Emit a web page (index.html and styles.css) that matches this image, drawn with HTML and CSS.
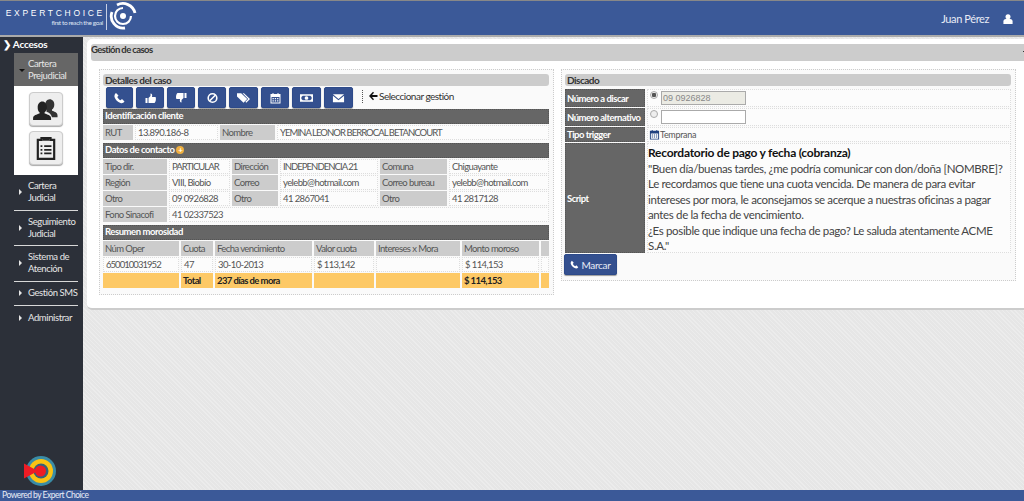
FILE: index.html
```html
<!DOCTYPE html>
<html>
<head>
  <meta charset="utf-8">
  <title>Gestión de casos</title>
  <link rel="stylesheet" href="styles.css">
</head>
<body>
  <header class="topbar">
    <div class="brand">
      <div class="brand-name">EXPERTCHOICE</div>
      <div class="brand-tag">first to reach the goal</div>
    </div>
    <svg class="brand-logo" viewBox="0 0 28 28" width="28" height="28">
      <circle cx="14" cy="14" r="3" fill="#fff"/>
      <path d="M14 6a8 8 0 1 0 8 8" fill="none" stroke="#fff" stroke-width="2.200"/>
      <path d="M8 3a12.500 12.500 0 0 1 18 8" fill="none" stroke="#fff" stroke-width="2.800"/>
      <path d="M3 10a12 12 0 0 0 13 16" fill="none" stroke="#fff" stroke-width="2.800"/>
    </svg>
    <div class="user">
      <span>Juan Pérez</span>
      <svg viewBox="0 0 12 12" width="10" height="10"><circle cx="6" cy="3.200" r="3" fill="#fff"/><path d="M0.500 12V9q0-3 3-3h5q3 0 3 3v3z" fill="#fff"/></svg>
    </div>
  </header>

  <div class="middle">
    <nav class="sidebar">
      <div class="nav-title"><span class="chevron">❯</span>Accesos</div>
      <div class="nav-item active"><i class="caret-down"></i><span>Cartera<br>Prejudicial</span></div>
      <div class="nav-sub">
        <div class="tile">
          <svg viewBox="0 0 28 26" width="26" height="24"><path d="M18 2.500c3 0 5 2.500 5 5.500 0 2.500-1 4.500-2.500 5.500v1.500c3 1 6 2 6 5v2h-6c-.5-3-3-5-6-6v-2c-1-1-1.500-3-1.500-5 0-3.500 2-6.500 5-6.500z" fill="#333"/><path d="M10 5c3 0 5 3 5 6 0 2.500-1 4.500-2.500 5.500V18c3 1 7 2 7 5v2H0v-2c0-3 4-4 7-5v-1.500C5.500 15.500 5 13.500 5 11c0-3 2-6 5-6z" fill="#222"/></svg>
        </div>
        <div class="tile">
          <svg viewBox="0 0 22 28" width="20" height="26"><path d="M2 5h4V3h10v2h4v21H2z" fill="none" stroke="#222" stroke-width="2.400"/><path d="M5 11h2v2H5zM9 11h8v2H9zM5 15h2v2H5zM9 15h8v2H9zM5 19h2v2H5zM9 19h8v2H9z" fill="#222"/><path d="M7 2h8v4H7z" fill="#222"/></svg>
        </div>
      </div>
      <div class="nav-item sep two"><i class="caret-right"></i><span>Cartera<br>Judicial</span></div>
      <div class="nav-item sep two"><i class="caret-right"></i><span>Seguimiento<br>Judicial</span></div>
      <div class="nav-item sep two"><i class="caret-right"></i><span>Sistema de<br>Atención</span></div>
      <div class="nav-item sep one"><i class="caret-right"></i><span>Gestión SMS</span></div>
      <div class="nav-item one"><i class="caret-right"></i><span>Administrar</span></div>
      <svg class="target" viewBox="0 0 32 32" width="32" height="32">
        <circle cx="17" cy="16" r="15" fill="#3a8ca6"/>
        <circle cx="17" cy="16" r="12" fill="#fbc312"/>
        <circle cx="17" cy="16" r="7.500" fill="#35637a"/>
        <circle cx="16.500" cy="16" r="5.500" fill="#ee1c25"/>
        <path d="M0 8.500L14 16 0 23.500z" fill="#ee1c25"/>
      </svg>
    </nav>

    <main class="content">
      <section class="card">
        <div class="card-title">Gestión de casos<i class="card-cut"></i></div>
        <div class="columns">
          <div class="panel panel-left">
            <div class="panel-head">Detalles del caso</div>
            <div class="toolbar">
              <button class="btn w27"><svg viewBox="0 0 12 12"><path d="M2.500 1L5 3.500 3.800 5c.5 1.300 1.700 2.600 3.200 3.200L8.500 7 11 9.500C10 11 8.500 11.500 7 11 4 10 2 8 1 5 .7 3.500 1.300 2 2.500 1z"/></svg></button>
              <button class="btn w28"><svg viewBox="0 0 12 12"><path d="M1 6h2v5H1zM4 6l2-2V1.500C7.500 1.500 8 3 7.500 5H11c.8 1 .5 5-1 6H4z"/></svg></button>
              <button class="btn w28"><svg viewBox="0 0 12 12"><path d="M11 6H9V1h2zM8 6l-2 2v2.500C4.500 10.500 4 9 4.500 7H1C.2 6 .5 2 2 1h6z"/></svg></button>
              <button class="btn w28"><svg viewBox="0 0 12 12"><circle cx="6" cy="6" r="4.300" fill="none" stroke="#fff" stroke-width="1.600"/><path d="M3 9L9 3" stroke="#fff" stroke-width="1.600"/></svg></button>
              <button class="btn w29"><svg viewBox="0 0 14 12"><path d="M0 1h4.500L11 7l-4 4-7-6.500z"/><path d="M6 1h1.500L14 7l-4 4-1-1 3-3z"/></svg></button>
              <button class="btn w28"><svg viewBox="0 0 12 12"><path fill-rule="evenodd" d="M1 2h2V1h1v1h4V1h1v1h2v9.500H1zM2 5v5.500h8V5zM3 6h1.300v1.200H3zM5.300 6h1.300v1.200H5.300zM7.600 6h1.300v1.200H7.600zM3 8.200h1.300v1.200H3zM5.300 8.200h1.300v1.200H5.300zM7.600 8.200h1.300v1.200H7.600z"/></svg></button>
              <button class="btn w29"><svg viewBox="0 0 14 12"><path fill-rule="evenodd" d="M0 2h14v8H0zM3 3.500L1.500 5v2L3 8.500h8L12.500 7V5L11 3.500zM7 4a2 2 0 1 1 0 4 2 2 0 0 1 0-4z"/></svg></button>
              <button class="btn w29"><svg viewBox="0 0 14 12"><path d="M1 2h12L7 7zM1 3.500l6 5 6-5V10.500H1z"/></svg></button>
              <span class="tool-sep"></span>
              <span class="tool-link"><svg viewBox="0 0 10 10" width="10" height="10"><path d="M5 0.800L1 5l4 4.200 1-1L4 6h5.500V4H4l2-2.200z" fill="#111"/></svg>Seleccionar gestión</span>
            </div>

            <div class="bar">Identificación cliente</div>
            <div class="row row-rut">
              <div class="lbl">RUT</div><div class="val">13.890.186-8</div>
              <div class="lbl">Nombre</div><div class="val caps">YEMINA LEONOR BERROCAL BETANCOURT</div>
            </div>

            <div class="bar bar-gap">Datos de contacto <i class="plus">+</i></div>
            <div class="row row-contact">
              <div class="lbl">Tipo dir.</div><div class="val caps">PARTICULAR</div>
              <div class="lbl">Dirección</div><div class="val caps">INDEPENDENCIA 21</div>
              <div class="lbl">Comuna</div><div class="val">Chiguayante</div>
            </div>
            <div class="row row-contact">
              <div class="lbl">Región</div><div class="val">VIII, Biobío</div>
              <div class="lbl">Correo</div><div class="val">yelebb@hotmail.com</div>
              <div class="lbl">Correo bureau</div><div class="val">yelebb@hotmail.com</div>
            </div>
            <div class="row row-contact">
              <div class="lbl">Otro</div><div class="val">09 0926828</div>
              <div class="lbl">Otro</div><div class="val">41 2867041</div>
              <div class="lbl">Otro</div><div class="val">41 2817128</div>
            </div>
            <div class="row row-sina">
              <div class="lbl">Fono Sinacofi</div><div class="val">41 02337523</div>
            </div>

            <div class="bar bar-gap">Resumen morosidad</div>
            <div class="row row-debt">
              <div class="lbl">Núm Oper</div><div class="lbl">Cuota</div><div class="lbl">Fecha vencimiento</div><div class="lbl">Valor cuota</div><div class="lbl">Intereses x Mora</div><div class="lbl">Monto moroso</div><div class="lbl"></div>
            </div>
            <div class="row row-debt">
              <div class="val caps">650010031952</div><div class="val">47</div><div class="val">30-10-2013</div><div class="val">$ 113,142</div><div class="val"></div><div class="val">$ 114,153</div><div class="val"></div>
            </div>
            <div class="row row-debt">
              <div class="tot"></div><div class="tot">Total</div><div class="tot">237 días de mora</div><div class="tot"></div><div class="tot"></div><div class="tot">$ 114,153</div><div class="tot"></div>
            </div>
          </div>

          <div class="panel panel-right">
            <div class="panel-head">Discado</div>
            <div class="dial dial-num">
              <div class="dial-lbl">Número a discar</div>
              <div class="dial-val"><i class="radio on"></i><input class="num" value="09 0926828" disabled></div>
            </div>
            <div class="dial dial-num">
              <div class="dial-lbl">Número alternativo</div>
              <div class="dial-val"><i class="radio"></i><input class="num"></div>
            </div>
            <div class="dial dial-type">
              <div class="dial-lbl">Tipo trigger</div>
              <div class="dial-val trigger"><svg viewBox="0 0 12 12" width="11" height="11"><path fill="#1f3f7f" fill-rule="evenodd" d="M1 2h2V1h1v1h4V1h1v1h2v9.500H1zM2 5v5.500h8V5zM3 6h1.300v1.200H3zM5.300 6h1.300v1.200H5.300zM7.600 6h1.300v1.200H7.600zM3 8.200h1.300v1.200H3zM5.300 8.200h1.300v1.200H5.300zM7.600 8.200h1.300v1.200H7.600z"/></svg>Temprana</div>
            </div>
            <div class="dial dial-script">
              <div class="dial-lbl">Script</div>
              <div class="dial-val script">
                <b>Recordatorio de pago y fecha (cobranza)</b><br>
                "Buen día/buenas tardes, ¿me podría comunicar con don/doña [NOMBRE]?<br>
                Le recordamos que tiene una cuota vencida. De manera de para evitar<br>
                intereses por mora, le aconsejamos se acerque a nuestras oficinas a pagar<br>
                antes de la fecha de vencimiento.<br>
                ¿Es posible que indique una fecha de pago? Le saluda atentamente ACME<br>
                S.A."
              </div>
            </div>
            <button class="btn call"><svg viewBox="0 0 12 12"><path d="M2.500 1L5 3.500 3.800 5c.5 1.300 1.700 2.600 3.200 3.200L8.500 7 11 9.500C10 11 8.500 11.500 7 11 4 10 2 8 1 5 .7 3.500 1.300 2 2.500 1z"/></svg>Marcar</button>
          </div>
        </div>
      </section>
    </main>
  </div>

  <footer class="footer">Powered by Expert Choice</footer>
</body>
</html>
```

FILE: styles.css
```css
* { box-sizing: border-box; }
html, body { height: 100%; }
body { margin: 0; height: 501px; overflow: hidden; display: flex; flex-direction: column; font-family: Lato, sans-serif; font-size: 10px; color: #555; background: #e6e6e6 repeating-linear-gradient(45deg, rgba(255,255,255,.25) 0 1px, transparent 1px 3px); }

/* top */
.topbar { height: 37px; flex: none; display: flex; align-items: flex-start; background: #3b5998; border-top: 1px solid #888; border-bottom: 2px solid #aaa; color: #fff; }
.brand { width: 107px; height: 26px; margin-top: 3px; padding: 4px 3px 0 0; border-right: 1px solid #c8d0e4; text-align: right; }
.brand-name { font-family: "Liberation Sans", sans-serif; font-size: 8.5px; letter-spacing: 2.7px; margin-right: -2px; line-height: 11px; }
.brand-tag { font-size: 6.5px; letter-spacing: -.4px; line-height: 8px; color: #dfe5f2; }
.brand-logo { margin: 1px 0 0 2px; }
.user { margin-left: auto; margin-top: 11px; margin-right: 11px; display: flex; align-items: center; gap: 14px; font-size: 11px; letter-spacing: -.4px; color: #e8ecf6; }

/* sidebar */
.middle { flex: 1; display: flex; min-height: 0; }
.sidebar { width: 83px; flex: none; display: flex; flex-direction: column; padding-top: 1px; background: #2c3039; color: #e6e6e6; }
.nav-title { height: 15px; font-size: 10px; letter-spacing: -.2px; font-weight: bold; color: #fff; line-height: 13px; padding-left: 3px; }
.chevron { font-size: 10px; margin-right: 2px; }
.nav-item { margin-left: 14px; width: 64px; display: flex; align-items: center; font-size: 9.5px; letter-spacing: -.4px; line-height: 12px; white-space: nowrap; }
.nav-item i { flex: none; margin-left: 5px; margin-right: 6px; }
.nav-item.active { height: 33px; background: #666; }
.nav-item.sep { border-bottom: 1px solid #d8d8d8; }
.nav-item.two { height: 35.5px; }
.nav-item.one { height: 24px; }
.nav-item i.caret-down { margin-left: 5px; margin-right: 3px; }
.caret-right { width: 0; height: 0; border-left: 3px solid #e6e6e6; border-top: 3px solid transparent; border-bottom: 3px solid transparent; }
.caret-down { width: 0; height: 0; margin-top: 2px; border-top: 3px solid #111; border-left: 3px solid transparent; border-right: 3px solid transparent; }
.nav-sub { margin-left: 14px; width: 64px; height: 89px; padding-top: 6px; background: #fff; display: flex; flex-direction: column; align-items: center; gap: 5px; }
.tile { width: 34px; height: 34px; display: flex; align-items: center; justify-content: center; background: #eee; border: 1px solid #ccc; border-radius: 4px; box-shadow: 0 1px 1px #aaa; }
.target { margin-top: auto; margin-left: 24px; margin-bottom: 3px; }

/* card */
.content { flex: 1; min-width: 0; padding: 2px 0 0 4px; overflow: hidden; }
.card { width: 960px; height: 271px; padding: 5px 0 0 4px; background: #fff; border-radius: 5px; border-bottom: 2px solid #ccc; }
.card-title { position: relative; height: 17px; background: #ccc; border-radius: 3px; font-size: 9.5px; letter-spacing: -.6px; font-weight: bold; line-height: 12px; color: #333; }
.card-cut { position: absolute; left: 932px; top: 7px; width: 2px; height: 1px; background: #333; }
.columns { display: flex; gap: 7px; margin-top: 8px; padding-left: 8px; }
.panel { width: 455px; padding: 4px 4px 0 3px; background: #fafafa; border: 1px dotted #ccc; }
.panel-left { height: 226px; }
.panel-right { height: 212px; }
.panel-head { height: 12px; padding-left: 2px; background: #ccc; border-radius: 3px; font-size: 10px; letter-spacing: -.5px; font-weight: bold; line-height: 12px; color: #333; }

/* toolbar */
.toolbar { height: 23px; padding-left: 3px; padding-top: 1px; display: flex; align-items: flex-start; gap: 3px; }
.btn { display: flex; align-items: center; justify-content: center; height: 21px; padding: 0; border: 1px solid #2d4a8a; border-radius: 2px; background: #34508f; box-shadow: 0 1px 1px #999; }
.btn svg { width: 13px; height: 12px; fill: #fff; }
.w27 { width: 27px; } .w28 { width: 28px; } .w29 { width: 29px; }
.tool-sep { width: 0; height: 13px; margin: 3px 2px 0 6px; border-left: 1px dotted #555; }
.tool-link { display: flex; align-items: center; gap: 1px; letter-spacing: -.5px; line-height: 18px; color: #333; }

/* rows */
.bar { height: 15px; background: #666; color: #fff; border: 1px dotted #555; font-size: 9.5px; letter-spacing: -.45px; font-weight: bold; line-height: 12px; padding-left: 1px; }
.bar-gap { margin-top: 3px; }
.plus { display: inline-block; width: 8px; height: 8px; border-radius: 50%; background: #f0b040; font-style: normal; font-size: 8px; line-height: 8px; text-align: center; color: #fff; }
.row { display: grid; gap: 1px 2px; height: 15px; margin-top: 1px; font-size: 9.5px; letter-spacing: -.6px; line-height: 15px; }
.row-rut { grid-template-columns: 30px 83px 55px 1fr; }
.row-contact { grid-template-columns: 64px 61px 46px 98px 67px 1fr; }
.row-sina { grid-template-columns: 64px 1fr; }
.row-debt { grid-template-columns: 76px 32px 97px 60px 84px 77px 1fr; }
.lbl, .val, .tot { padding-left: 2px; white-space: nowrap; overflow: hidden; }
.lbl { background: #ccc; }
.val { background: #fcfcfc; border: 1px dotted #ddd; line-height: 13px; }
.caps { letter-spacing: -.95px; }
.tot { background: #fdc966; font-weight: bold; color: #222; }

/* discado */
.panel-right .panel-head { margin-bottom: 3px; }
.dial { display: grid; grid-template-columns: 80px 1fr; grid-template-rows: 1fr; gap: 2px; margin-bottom: 1px; }
.dial-num { height: 18px; }
.dial-type { height: 15px; margin-top: 1px; }
.dial-script { height: 110px; }
.dial-lbl { display: flex; align-items: center; padding-left: 1px; background: #666; border: 1px dotted #555; color: #fff; font-weight: bold; font-size: 9.5px; letter-spacing: -.5px; white-space: nowrap; }
.dial-val { display: flex; align-items: center; gap: 3px; background: #fcfcfc; border: 1px dotted #ddd; padding-left: 1px; min-height: 0; }
.radio { width: 8px; height: 8px; margin-left: 1px; border: 1px solid #aaa; border-radius: 50%; background: #eee; align-self: flex-start; margin-top: 1px; }
.radio.on { background: radial-gradient(circle, #555 0 2px, #eee 2.500px); }
.num { width: 85px; height: 14px; padding: 0 1px; border: 1px solid #aaa; font-family: "Liberation Sans", sans-serif; font-size: 9px; color: #888; background: #fff; }
.num:disabled { background: #ebebe4; }
.trigger { gap: 0; font-size: 9px; letter-spacing: -.3px; }
.script { display: block; padding: 1px 0; font-size: 11.5px; letter-spacing: -.35px; line-height: 15.500px; color: #444; white-space: nowrap; }
.script b { font-size: 12px; letter-spacing: -.25px; color: #111; }
.call { width: 53px; gap: 2px; margin: 1px 0 0 -1px; color: #e8ecf6; font: 10px Lato, sans-serif; letter-spacing: -.3px; }
.call svg { width: 9px; height: 9px; }

.footer { height: 11px; flex: none; background: #3b5998; color: #e8ecf6; font-size: 8.5px; letter-spacing: -.5px; line-height: 11px; padding-left: 2px; }
```
